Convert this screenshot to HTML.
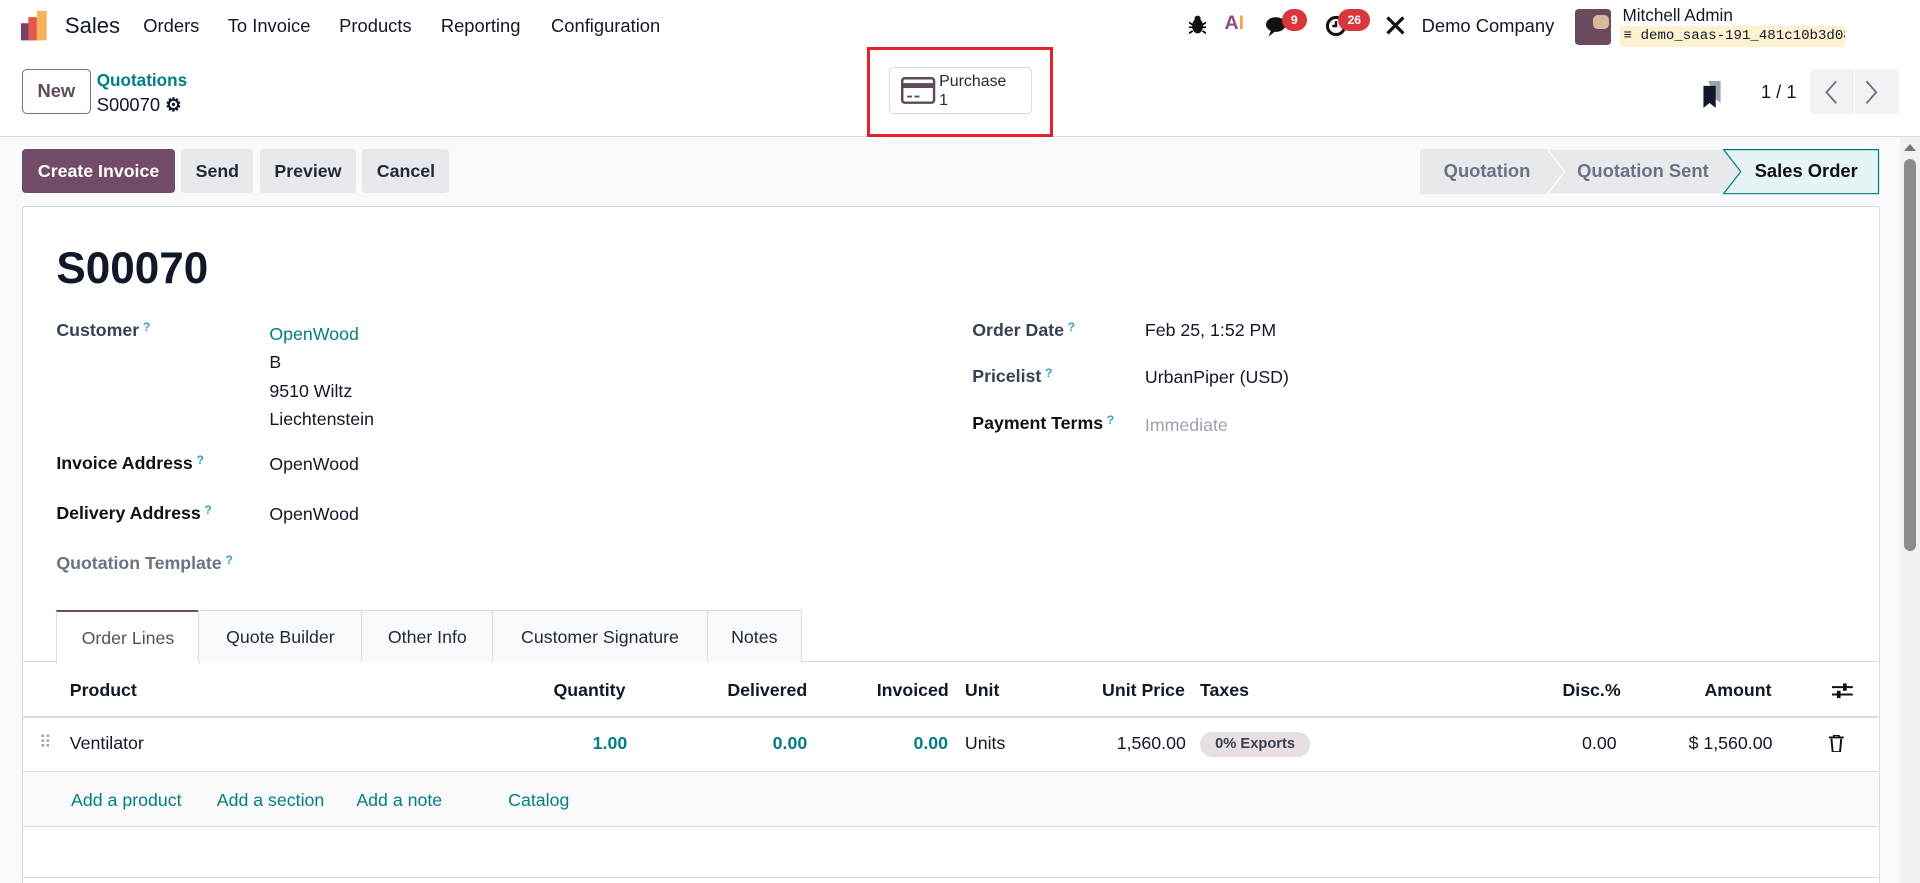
<!DOCTYPE html>
<html><head><meta charset="utf-8"><style>
*{box-sizing:border-box;margin:0;padding:0}
html,body{width:1920px;height:883px;overflow:hidden;background:#fff}
#w{zoom:1.22449;width:1568px;height:721px;position:relative;font-family:"Liberation Sans",sans-serif;font-size:14.5px;color:#111827;background:#f9fafb}
.a{position:absolute;white-space:nowrap}
.nav{position:absolute;left:0;top:0;width:1568px;height:44px;background:#fff}
.cp{position:absolute;left:0;top:44px;width:1568px;height:68px;background:#fff;border-bottom:1px solid #d8dadd}
.btn{position:absolute;top:122px;height:36px;border-radius:3px;background:#e7e9ed;font-weight:bold;line-height:36px;text-align:center;color:#1f2937}
.sheet{position:absolute;left:18px;top:168px;width:1517px;height:560px;background:#fff;border:1px solid #d8dadd;border-radius:3px}
.lbl{font-weight:bold;color:#374151}
.q{color:#3aa1c0;font-size:10px;vertical-align:top;margin-left:3px}
.teal{color:#017e84}
.badge{position:absolute;background:#d9363e;color:#fff;border-radius:10px;font-size:10px;font-weight:bold;height:18px;line-height:18px;text-align:center}
.tab{position:absolute;top:498px;height:43px;border:1px solid #d8dadd;border-bottom:none;background:#fff;line-height:43px;text-align:center;color:#1f2937}
.th{font-weight:bold;top:555px}
.num{color:#017e84;font-weight:bold}
</style></head><body><div id="w">
<div class="nav">
 <svg class="a" style="left:17px;top:9px" width="25" height="25" viewBox="0 0 25 25"><rect x="0" y="10" width="7" height="14" fill="#7a3f65"/><rect x="6" y="5" width="7" height="19" fill="#e2584d"/><rect x="13" y="0" width="8" height="24" fill="#f7b35a"/></svg>
 <div class="a" style="left:53px;top:11px;font-size:18px">Sales</div>
 <div class="a" style="left:117px;top:12px;font-size:15px">Orders</div>
 <div class="a" style="left:186px;top:12px;font-size:15px">To Invoice</div>
 <div class="a" style="left:277px;top:12px;font-size:15px">Products</div>
 <div class="a" style="left:360px;top:12px;font-size:15px">Reporting</div>
 <div class="a" style="left:450px;top:12px;font-size:15px">Configuration</div>
 <svg class="a" style="left:971px;top:12px" width="14" height="16" viewBox="0 0 14 16"><ellipse cx="7" cy="9" rx="4.5" ry="6" fill="#111"/><circle cx="7" cy="3" r="2.5" fill="#111"/><path d="M0 6l3 2M14 6l-3 2M0 10h3M14 10h-3M0 15l3-2M14 15l-3-2" stroke="#111" stroke-width="1.5"/></svg>
 <div class="a" style="left:1000px;top:10px;font-size:16px;font-weight:bold;color:#8a4f8a">A<span style="color:#f3a445">I</span></div>
 <svg class="a" style="left:1034px;top:13px" width="20" height="18" viewBox="0 0 20 18"><ellipse cx="8" cy="7" rx="8" ry="6" fill="#111"/><path d="M4 12 L2 17 L8 12Z" fill="#111"/></svg>
 <div class="badge" style="left:1047px;top:7px;width:20px">9</div>
 <svg class="a" style="left:1082px;top:12px" width="18" height="18" viewBox="0 0 18 18"><circle cx="9" cy="9" r="7" fill="none" stroke="#111" stroke-width="2.5"/><path d="M9 5v4h-3" stroke="#111" stroke-width="2" fill="none"/></svg>
 <div class="badge" style="left:1093px;top:7px;width:26px">26</div>
 <svg class="a" style="left:1131px;top:12px" width="17" height="17" viewBox="0 0 17 17"><path d="M2 2l13 13M15 2L2 15" stroke="#111" stroke-width="2.6"/></svg>
 <div class="a" style="left:1161px;top:12px;font-size:15px">Demo Company</div>
 <div class="a" style="left:1286px;top:7px;width:30px;height:30px;background:#6b4a5e;border-radius:3px"></div>
 <div class="a" style="left:1301px;top:12px;width:13px;height:12px;background:#d9b99b;border-radius:4px"></div>
 <div class="a" style="left:1325px;top:4px;font-size:14px">Mitchell Admin</div>
 <div class="a" style="left:1323px;top:21px;width:184px;height:17px;background:#fdf1cf;font-family:'Liberation Mono',monospace;font-size:11.5px;line-height:17px;padding-left:3px;overflow:hidden">≡ demo_saas-191_481c10b3d084…</div>
</div>
<div class="cp">
 <div class="a" style="left:18px;top:12px;width:56px;height:37px;border:1px solid #8c6a80;border-radius:4px;line-height:35px;text-align:center;font-weight:bold;color:#5e4a58;font-size:15px">New</div>
 <div class="a teal" style="left:79px;top:13px;font-weight:bold;font-size:14px">Quotations</div>
 <div class="a" style="left:79px;top:33px;font-size:15px">S00070 <b>⚙</b></div>
 <div class="a" style="left:708px;top:-6px;width:152px;height:74px;border:3px solid #e3202c"></div>
 <div class="a" style="left:726px;top:11px;width:117px;height:38px;border:1px solid #d8dadd;border-radius:4px;background:#fff"></div>
 <svg class="a" style="left:736px;top:19px" width="28" height="22" viewBox="0 0 28 22"><rect x="1" y="1" width="26" height="20" rx="2" fill="none" stroke="#5e4a58" stroke-width="2"/><rect x="1" y="5" width="26" height="4" fill="#5e4a58"/><path d="M5 16h4M11 16h4" stroke="#5e4a58" stroke-width="1.5"/></svg>
 <div class="a" style="left:767px;top:16px;font-size:13px;line-height:15px;color:#1f2937">Purchase<br>1</div>
 <svg class="a" style="left:1389px;top:22px" width="18" height="22" viewBox="0 0 18 22"><path d="M6 0h10v18l-5-4z" fill="#9ca3af"/><path d="M2 4h10v18l-5-4-5 4z" fill="#111827"/></svg>
 <div class="a" style="left:1438px;top:22px;font-size:15px">1 / 1</div>
 <div class="a" style="left:1478px;top:12px;width:73px;height:37px;background:#f1f2f4;border-radius:4px"></div>
 <div class="a" style="left:1514px;top:12px;width:1px;height:37px;background:#fff"></div>
 <svg class="a" style="left:1490px;top:21px" width="12" height="20" viewBox="0 0 12 20"><path d="M10 1L2 10l8 9" stroke="#6b7280" stroke-width="1.5" fill="none"/></svg>
 <svg class="a" style="left:1522px;top:21px" width="12" height="20" viewBox="0 0 12 20"><path d="M2 1l8 9-8 9" stroke="#6b7280" stroke-width="1.5" fill="none"/></svg>
</div>
<div class="btn" style="left:18px;width:125px;background:#714b67;color:#fff">Create Invoice</div>
<div class="btn" style="left:148px;width:59px">Send</div>
<div class="btn" style="left:212px;width:79px">Preview</div>
<div class="btn" style="left:296px;width:71px">Cancel</div>
<svg class="a" style="left:1160px;top:122px" width="375" height="37" viewBox="0 0 375 37">
 <path d="M0 2a2 2 0 0 1 2-2H104L118 18.5L104 37H2a2 2 0 0 1-2-2Z" fill="#e7e9ed"/>
 <path d="M104 0H248L262 18.5L248 37H104L118 18.5Z" fill="#e7e9ed" stroke="#fff" stroke-width="1"/>
 <path d="M248 0.5H374.5V36.5H248L262 18.5Z" fill="#e6f4f5" stroke="#017e84" stroke-width="1"/>
</svg>
<div class="a" style="left:1179px;top:131px;font-size:15px;font-weight:bold;color:#6b7280">Quotation</div>
<div class="a" style="left:1288px;top:131px;font-size:15px;font-weight:bold;color:#6b7280">Quotation Sent</div>
<div class="a" style="left:1433px;top:131px;font-size:15px;font-weight:bold;color:#111">Sales Order</div>
<div class="a" style="left:1552px;top:112px;width:16px;height:609px;background:#f1f1f1"></div>
<div class="a" style="left:1555px;top:118px;width:0;height:0;border:5px solid transparent;border-bottom:6px solid #777;border-top:0"></div>
<div class="a" style="left:1555px;top:130px;width:10px;height:320px;background:#8c8c8c;border-radius:5px"></div>
<div class="sheet"></div>
<div class="a" style="left:46px;top:199px;font-size:36px;font-weight:bold">S00070</div>
<div class="a lbl" style="left:46px;top:261px">Customer<span class="q">?</span></div>
<div class="a" style="left:220px;top:261px;line-height:23.3px"><span class="teal">OpenWood</span><br>B<br>9510 Wiltz<br>Liechtenstein</div>
<div class="a lbl" style="left:46px;top:370px;color:#111">Invoice Address<span class="q">?</span></div>
<div class="a" style="left:220px;top:371px">OpenWood</div>
<div class="a lbl" style="left:46px;top:411px;color:#111">Delivery Address<span class="q">?</span></div>
<div class="a" style="left:220px;top:412px">OpenWood</div>
<div class="a lbl" style="left:46px;top:452px;color:#6b7280">Quotation Template<span class="q">?</span></div>
<div class="a lbl" style="left:794px;top:261px">Order Date<span class="q">?</span></div>
<div class="a" style="left:935px;top:261px">Feb 25, 1:52 PM</div>
<div class="a lbl" style="left:794px;top:299px">Pricelist<span class="q">?</span></div>
<div class="a" style="left:935px;top:300px">UrbanPiper (USD)</div>
<div class="a lbl" style="left:794px;top:337px;color:#111">Payment Terms<span class="q">?</span></div>
<div class="a" style="left:935px;top:339px;color:#9ca3af">Immediate</div>
<div class="a" style="left:19px;top:540px;width:1515px;height:1px;background:#d8dadd"></div>
<div class="tab" style="left:46px;width:117px;border-top:2px solid #714b67;height:44px;color:#4b5563">Order Lines</div>
<div class="tab" style="left:162px;width:134px;background:#f9fafb">Quote Builder</div>
<div class="tab" style="left:295px;width:108px;background:#f9fafb">Other Info</div>
<div class="tab" style="left:402px;width:176px;background:#f9fafb">Customer Signature</div>
<div class="tab" style="left:577px;width:78px;background:#f9fafb">Notes</div>
<div class="a th" style="left:57px">Product</div>
<div class="a th" style="left:452px">Quantity</div>
<div class="a th" style="left:594px">Delivered</div>
<div class="a th" style="left:716px">Invoiced</div>
<div class="a th" style="left:788px">Unit</div>
<div class="a th" style="left:900px">Unit Price</div>
<div class="a th" style="left:980px">Taxes</div>
<div class="a th" style="left:1276px">Disc.%</div>
<div class="a th" style="left:1392px">Amount</div>
<svg class="a" style="left:1496px;top:556px" width="17" height="16" viewBox="0 0 17 16"><path d="M0 5h17M0 11h17" stroke="#111" stroke-width="1.6"/><rect x="9" y="2" width="3" height="6" fill="#111"/><rect x="4" y="8" width="3" height="6" fill="#111"/></svg>
<div class="a" style="left:19px;top:585px;width:1515px;height:1px;background:#d8dadd"></div>
<div class="a" style="left:32px;top:598px;color:#9ca3af;font-size:14px;letter-spacing:-2px">⠿</div>
<div class="a" style="left:57px;top:599px">Ventilator</div>
<div class="a num" style="left:484px;top:599px">1.00</div>
<div class="a num" style="left:631px;top:599px">0.00</div>
<div class="a num" style="left:746px;top:599px">0.00</div>
<div class="a" style="left:788px;top:599px">Units</div>
<div class="a" style="left:912px;top:599px">1,560.00</div>
<div class="a" style="left:980px;top:598px;width:90px;height:20px;background:#e7dfe0;border-radius:10px;font-size:12px;line-height:21px;text-align:center;font-weight:bold;color:#374151">0% Exports</div>
<div class="a" style="left:1292px;top:599px">0.00</div>
<div class="a" style="left:1379px;top:599px">$ 1,560.00</div>
<svg class="a" style="left:1494px;top:600px" width="12" height="14" viewBox="0 0 12 14"><path d="M0 2h12M4 2V0h4v2M2 3l1 11h6l1-11" stroke="#111" stroke-width="1.6" fill="none"/></svg>
<div class="a" style="left:19px;top:630px;width:1515px;height:45px;background:#fafafa;border-top:1px solid #d8dadd;border-bottom:1px solid #d8dadd"></div>
<div class="a teal" style="left:58px;top:645px">Add a product</div>
<div class="a teal" style="left:177px;top:645px">Add a section</div>
<div class="a teal" style="left:291px;top:645px">Add a note</div>
<div class="a teal" style="left:415px;top:645px">Catalog</div>
<div class="a" style="left:19px;top:716px;width:1515px;height:1px;background:#d8dadd"></div>
</div></body></html>
